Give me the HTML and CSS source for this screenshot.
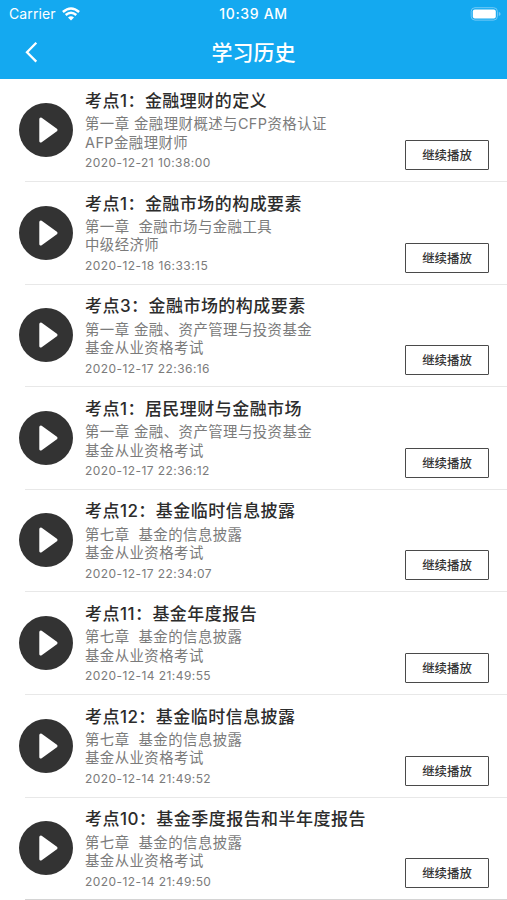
FILE: index.html
```html
<!DOCTYPE html>
<html lang="zh-CN">
<head>
<meta charset="utf-8">
<title>学习历史</title>
<link rel="stylesheet" href="styles.css">
</head>
<body>
<header class="top">
  <div class="status">
    <div class="carrier"><span>Carrier</span>
      <svg width="18" height="14" viewBox="0 0 18 14" fill="none" stroke="#fff" stroke-width="2.5"><path d="M.9 5Q9-2 17.1 5M3.7 8Q9 3.6 14.3 8"/><path d="M6 10.4Q9 8 12 10.4L9 13.6Z" fill="#fff" stroke="none"/></svg>
    </div>
    <div class="clock">10:39 AM</div>
    <svg class="battery" width="32" height="14" viewBox="0 0 32 14"><rect x="1.2" y=".7" width="26.2" height="12.4" rx="3.8" fill="none" stroke="#72c9f6"/><rect x="2.8" y="2.4" width="23" height="9" rx="2" fill="#fff"/><path d="M28.8 4.7Q30.6 5.4 30.6 6.9T28.8 9.1Z" fill="#72c9f6"/></svg>
  </div>
  <div class="nav">
    <svg class="back" width="14" height="22" viewBox="0 0 14 22"><path d="M12.3 .8L3 10.2L12.3 19.6" fill="none" stroke="#fff" stroke-width="2.3"/></svg>
    <h1>学习历史</h1>
  </div>
</header>
<main id="list"></main>
<script src="app.js"></script>
</body>
</html>
```
FILE: styles.css
```css
* { box-sizing: border-box; }
body { margin: 0; height: 900px; overflow: hidden; background: #fff; font-family: Inter, "Noto Sans CJK SC", sans-serif; }
.top { height: 79px; background: #14a9f0; color: #fff; }
.status { height: 27px; display: grid; grid-template-columns: 1fr auto 1fr; align-items: center; padding: 0 5px 0 9px; }
.carrier { display: flex; align-items: center; gap: 6px; font-size: 14px; letter-spacing: .1px; }
.clock { font-size: 14px; font-weight: 500; letter-spacing: .65px; margin-right: 4px; }
.battery { justify-self: end; }
.nav { height: 52px; display: grid; grid-template-columns: 40px 1fr 40px; align-items: center; }
.back { margin-left: 24px; }
h1 { margin: 0; text-align: center; font-size: 21px; line-height: 30px; font-weight: 500; }
.item { height: 102.6px; display: flex; padding-left: 19px; position: relative; }
.item::after { content: ""; position: absolute; left: 25px; right: 0; bottom: -.4px; height: 1px; background: #e8e8e8; }
.item:last-child::after { bottom: 0; background: #d4d4d4; }
.play { margin-top: 24px; flex: none; }
.info { margin-left: 12px; padding-top: 11px; flex: 1; white-space: pre; }
h2 { margin: 0 0 3.4px; font-size: 17px; line-height: 22px; font-weight: 500; color: #2c2c2c; letter-spacing: .46px; }
.info p { margin: 0; font-size: 14.4px; line-height: 18.5px; color: #7b7b7b; letter-spacing: .45px; }
.info time { display: block; margin-top: 2.1px; font-size: 12px; line-height: 18px; color: #7b7b7b; letter-spacing: .43px; }
button { position: absolute; right: 18px; top: 61px; width: 84px; height: 30px; padding: 2px 0 0; border: 1px solid #4a4a4a; border-radius: 1px; background: #fff; color: #333; font: 500 12.4px/26px Inter, "Noto Sans CJK SC", sans-serif; }
```
FILE: app.js
```js
const rows = [
  ["考点1：金融理财的定义", "第一章 金融理财概述与CFP资格认证", "AFP金融理财师", "2020-12-21 10:38:00"],
  ["考点1：金融市场的构成要素", "第一章  金融市场与金融工具", "中级经济师", "2020-12-18 16:33:15"],
  ["考点3：金融市场的构成要素", "第一章 金融、资产管理与投资基金", "基金从业资格考试", "2020-12-17 22:36:16"],
  ["考点1：居民理财与金融市场", "第一章 金融、资产管理与投资基金", "基金从业资格考试", "2020-12-17 22:36:12"],
  ["考点12：基金临时信息披露", "第七章  基金的信息披露", "基金从业资格考试", "2020-12-17 22:34:07"],
  ["考点11：基金年度报告", "第七章  基金的信息披露", "基金从业资格考试", "2020-12-14 21:49:55"],
  ["考点12：基金临时信息披露", "第七章  基金的信息披露", "基金从业资格考试", "2020-12-14 21:49:52"],
  ["考点10：基金季度报告和半年度报告", "第七章  基金的信息披露", "基金从业资格考试", "2020-12-14 21:49:50"]
];
document.getElementById("list").innerHTML = rows.map(([title, chapter, course, time]) => `<article class="item">
<svg class="play" width="54" height="54" viewBox="0 0 54 54"><circle cx="27" cy="27" r="27" fill="#333"/><path d="M21.8 16L37 27L21.8 38Z" fill="#fff" stroke="#fff" stroke-width="3" stroke-linejoin="round"/></svg>
<div class="info"><h2>${title}</h2><p>${chapter}</p><p>${course}</p><time>${time}</time></div>
<button>继续播放</button></article>`).join("");
```
